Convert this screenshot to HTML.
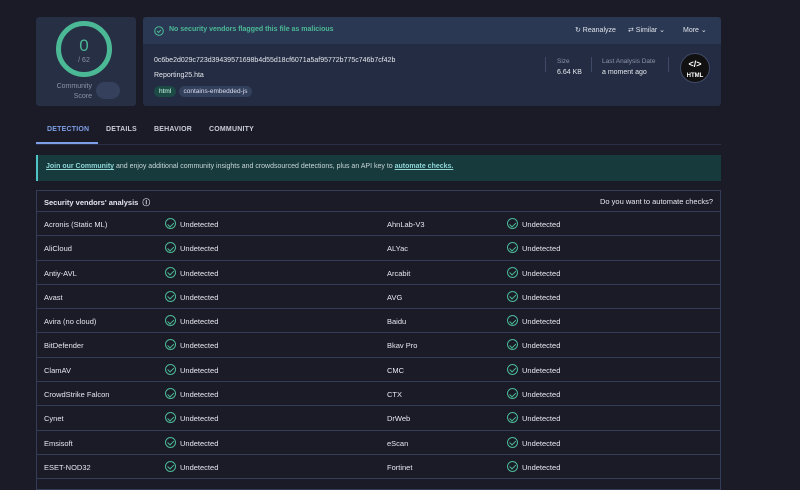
<!DOCTYPE html>
<html><head><style>
*{margin:0;padding:0;box-sizing:border-box}
body{width:800px;height:474px;overflow:hidden;background:#1b1a27;font-family:"Liberation Sans",sans-serif;color:#e6e8ef;font-size:8px;position:relative}
.abs{position:absolute}
.score{left:36px;top:17px;width:100px;height:89px;background:#262f44;border-radius:3px}
.panel{left:143px;top:17px;width:578px;height:89px;background:#232c42;border-radius:3px;overflow:hidden}
.strip{left:0;top:0;width:578px;height:27px;background:#2b3853}
.tag{display:inline-block;padding:2px 5px;border-radius:8px;font-size:6.5px}
.tabs span{position:absolute;top:126px;font-size:7px;font-weight:bold;color:#c9cdd8;letter-spacing:.2px}
.banner{left:36px;top:155px;width:685px;height:26px;background:#173a3d;border-left:2px solid #4fc3c8;font-size:7px;color:#c9d6d8;padding:8px 8px}
.banner b{color:#8ed6d8;text-decoration:underline}
.table{left:36px;top:190px;width:685px;height:300px;border:1px solid #343d58}
.hdr{height:21px;border-bottom:1px solid #343d58;font-size:7.5px;font-weight:bold;padding:6px 7px;position:relative}
.row{height:24.3px;border-bottom:1px solid #343d58;position:relative;font-size:7.5px}
.row span{position:absolute;top:8px}
.ck{position:absolute;top:6px;width:11px;height:11px;border:1.3px solid #4bb996;border-radius:50%}
.ck:after{content:"";position:absolute;left:3px;top:1.5px;width:2.5px;height:4.5px;border:solid #4bb996;border-width:0 1.3px 1.3px 0;transform:rotate(45deg)}
</style></head><body>
<div class="abs score">
 <svg class="abs" style="left:19px;top:3px" width="58" height="58"><circle cx="29" cy="29" r="25.5" fill="none" stroke="#4bb996" stroke-width="5"/></svg>
 <div class="abs" style="left:0;width:96px;top:19px;text-align:center;font-size:17px;color:#4bb996">0</div>
 <div class="abs" style="left:0;width:96px;top:40px;text-align:center;font-size:7px;color:#8c93a6">/ 62</div>
 <div class="abs" style="left:10px;top:65px;font-size:7px;color:#8c93a6;text-align:right;width:46px;line-height:10px">Community<br>Score</div>
 <div class="abs" style="left:60px;top:65px;width:24px;height:17px;border-radius:9px;background:#34405c"></div>
</div>
<div class="abs panel">
 <div class="abs strip"></div>
 <svg class="abs" style="left:11px;top:9px" width="10" height="10"><circle cx="5" cy="5" r="4.3" fill="none" stroke="#4bb996" stroke-width="1"/><path d="M3 5l1.5 1.5L7 3.8" fill="none" stroke="#4bb996" stroke-width="1"/></svg>
 <div class="abs" style="left:26px;top:9px;font-size:7px;font-weight:bold;color:#4bb996">No security vendors flagged this file as malicious</div>
 <div class="abs" style="left:432px;top:9px;font-size:7px;color:#dfe3ec">↻ Reanalyze</div>
 <div class="abs" style="left:485px;top:9px;font-size:7px;color:#dfe3ec">⇄ Similar ⌄</div>
 <div class="abs" style="left:540px;top:9px;font-size:7px;color:#dfe3ec">More ⌄</div>
 <div class="abs" style="left:11px;top:40px;font-size:7px">0c6be2d029c723d39439571698b4d55d18cf6071a5af95772b775c746b7cf42b</div>
 <div class="abs" style="left:11px;top:55px;font-size:7px">Reporting25.hta</div>
 <div class="abs" style="left:11px;top:69px"><span class="tag" style="background:#1c4a44;color:#cfe">html</span> <span class="tag" style="background:#33405c;color:#dde">contains-embedded-js</span></div>
 <div class="abs" style="left:402px;top:40px;width:1px;height:15px;background:#3f4a66"></div>
 <div class="abs" style="left:414px;top:41px;font-size:6.5px;color:#8c93a6">Size</div>
 <div class="abs" style="left:414px;top:52px;font-size:7px">6.64 KB</div>
 <div class="abs" style="left:448px;top:40px;width:1px;height:15px;background:#3f4a66"></div>
 <div class="abs" style="left:459px;top:41px;font-size:6.5px;color:#8c93a6">Last Analysis Date</div>
 <div class="abs" style="left:459px;top:52px;font-size:7px">a moment ago</div>
 <div class="abs" style="left:525px;top:40px;width:1px;height:15px;background:#3f4a66"></div>
 <div class="abs" style="left:537px;top:36px;width:30px;height:30px;border-radius:50%;background:#111;border:1px solid #3f4a66;color:#fff;text-align:center;font-weight:bold;font-size:9px;line-height:10px;padding-top:5px">&lt;/&gt;<br><span style="font-size:6px">HTML</span></div>
</div>
<div class="tabs"><span style="left:47px;color:#7ea0e8">DETECTION</span><span style="left:106px">DETAILS</span><span style="left:154px">BEHAVIOR</span><span style="left:209px">COMMUNITY</span></div>
<div class="abs" style="left:36px;top:142px;width:62px;height:2px;background:#7ea0e8"></div>
<div class="abs" style="left:36px;top:144px;width:685px;height:1px;background:#2a3046"></div>
<div class="abs banner"><b>Join our Community</b> and enjoy additional community insights and crowdsourced detections, plus an API key to <b>automate checks.</b></div>
<div class="abs table">
<div class="hdr">Security vendors' analysis &nbsp;ⓘ<span style="position:absolute;right:7px;top:6px;font-weight:normal">Do you want to automate checks?</span></div>
<div class="row"><span style="left:7px">Acronis (Static ML)</span><i class="ck" style="left:128px"></i><span style="left:143px">Undetected</span><span style="left:350px">AhnLab-V3</span><i class="ck" style="left:470px"></i><span style="left:485px">Undetected</span></div>
<div class="row"><span style="left:7px">AliCloud</span><i class="ck" style="left:128px"></i><span style="left:143px">Undetected</span><span style="left:350px">ALYac</span><i class="ck" style="left:470px"></i><span style="left:485px">Undetected</span></div>
<div class="row"><span style="left:7px">Antiy-AVL</span><i class="ck" style="left:128px"></i><span style="left:143px">Undetected</span><span style="left:350px">Arcabit</span><i class="ck" style="left:470px"></i><span style="left:485px">Undetected</span></div>
<div class="row"><span style="left:7px">Avast</span><i class="ck" style="left:128px"></i><span style="left:143px">Undetected</span><span style="left:350px">AVG</span><i class="ck" style="left:470px"></i><span style="left:485px">Undetected</span></div>
<div class="row"><span style="left:7px">Avira (no cloud)</span><i class="ck" style="left:128px"></i><span style="left:143px">Undetected</span><span style="left:350px">Baidu</span><i class="ck" style="left:470px"></i><span style="left:485px">Undetected</span></div>
<div class="row"><span style="left:7px">BitDefender</span><i class="ck" style="left:128px"></i><span style="left:143px">Undetected</span><span style="left:350px">Bkav Pro</span><i class="ck" style="left:470px"></i><span style="left:485px">Undetected</span></div>
<div class="row"><span style="left:7px">ClamAV</span><i class="ck" style="left:128px"></i><span style="left:143px">Undetected</span><span style="left:350px">CMC</span><i class="ck" style="left:470px"></i><span style="left:485px">Undetected</span></div>
<div class="row"><span style="left:7px">CrowdStrike Falcon</span><i class="ck" style="left:128px"></i><span style="left:143px">Undetected</span><span style="left:350px">CTX</span><i class="ck" style="left:470px"></i><span style="left:485px">Undetected</span></div>
<div class="row"><span style="left:7px">Cynet</span><i class="ck" style="left:128px"></i><span style="left:143px">Undetected</span><span style="left:350px">DrWeb</span><i class="ck" style="left:470px"></i><span style="left:485px">Undetected</span></div>
<div class="row"><span style="left:7px">Emsisoft</span><i class="ck" style="left:128px"></i><span style="left:143px">Undetected</span><span style="left:350px">eScan</span><i class="ck" style="left:470px"></i><span style="left:485px">Undetected</span></div>
<div class="row"><span style="left:7px">ESET-NOD32</span><i class="ck" style="left:128px"></i><span style="left:143px">Undetected</span><span style="left:350px">Fortinet</span><i class="ck" style="left:470px"></i><span style="left:485px">Undetected</span></div>
</div>
</body></html>
